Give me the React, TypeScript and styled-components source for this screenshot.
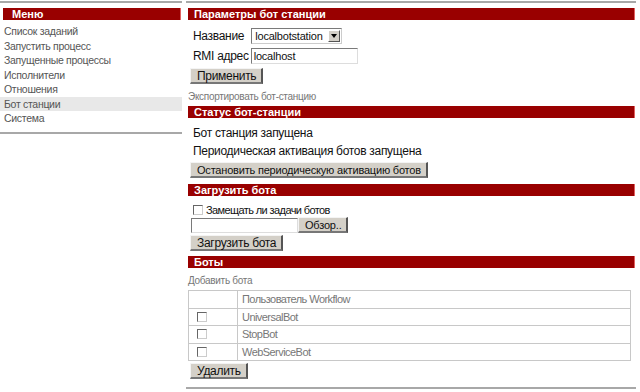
import React from 'react'
import styled, { createGlobalStyle } from 'styled-components'

const red = '#990000'

const GlobalStyle = createGlobalStyle`
  body {
    margin: 0;
    background: #fff;
    font-family: 'Liberation Sans', Arial, sans-serif;
  }
`

const Page = styled.div`
  display: flex;
  flex-direction: row;
  align-items: flex-start;
  width: 640px;
  height: 392px;
  overflow: hidden;
`

const Side = styled.div`
  width: 182px;
  margin-top: 1px;
  border-top: 2px solid #a8a8a8;
  border-bottom: 2px solid #a8a8a8;
  padding: 5px 0 6px 0;
`

const Main = styled.div`
  width: 450px;
  margin-left: 4px;
  margin-top: 1px;
  border-top: 2px solid #a8a8a8;
  border-bottom: 2px solid #a8a8a8;
  padding: 5px 0 8px 0;
`

const SectionBar = styled.div<{ $left?: number }>`
  height: 12px;
  margin-left: ${p => p.$left ?? 2}px;
  margin-right: 1px;
  background: ${red};
  border-right: 1px solid #e06060;
  color: #fff;
  font-weight: bold;
  font-size: 11px;
  line-height: 12px;
  padding-left: ${p => (p.$left ? 9 : 6)}px;
`

const MenuList = styled.div`
  padding-top: 4px;
`

const MenuItem = styled.div<{ $active?: boolean }>`
  height: 14.5px;
  line-height: 14.5px;
  font-size: 10.5px;
  letter-spacing: -0.3px;
  color: #555;
  padding-left: 4px;
  background: ${p => (p.$active ? '#e8e8e8' : 'transparent')};
`

const Body = styled.div<{ $top?: number; $left?: number }>`
  padding: ${p => p.$top ?? 6}px 0 0 ${p => p.$left ?? 4}px;
  display: flex;
  flex-direction: column;
  align-items: flex-start;
`

const FieldRow = styled.div`
  display: flex;
  align-items: center;
  gap: 4px;
  height: 20px;
  padding-left: 3px;
  font-size: 12px;
  letter-spacing: -0.3px;
  color: #111;
`

const Select = styled.div`
  width: 86px;
  height: 14px;
  border: 1px solid #7a7a7a;
  border-right-color: #ccc;
  border-bottom-color: #ccc;
  display: flex;
  align-items: center;
  font-size: 11px;
  letter-spacing: -0.2px;
  padding-left: 3px;
  justify-content: space-between;
  margin-left: 3px;
`

const SelectArrow = styled.div`
  width: 12px;
  height: 12px;
  background: #d4d0c8;
  border: 1px solid #fff;
  border-right-color: #555;
  border-bottom-color: #555;
  box-sizing: border-box;
  display: flex;
  align-items: center;
  justify-content: center;
  margin-right: 1px;
`

const TextBox = styled.div<{ $w: number; $h?: number }>`
  width: ${p => p.$w}px;
  height: ${p => p.$h ?? 14}px;
  border: 1px solid #7a7a7a;
  border-right-color: #ddd;
  border-bottom-color: #ddd;
  font-size: 11px;
  letter-spacing: -0.2px;
  line-height: 14px;
  padding-left: 2px;
  background: #fff;
`

const Button = styled.div<{ $size?: number }>`
  display: inline-flex;
  align-items: center;
  height: 16px;
  box-sizing: border-box;
  padding: 0 5px 0 6px;
  background: #d4d0c8;
  border: 1px solid #f4f4f4;
  border-right: 2px solid #555;
  border-bottom: 2px solid #777;
  font-size: ${p => p.$size ?? 11}px;
  color: #111;
  letter-spacing: ${p => (p.$size ? -0.3 : -0.2)}px;
`

const Note = styled.div<{ $top?: number; $bottom?: number }>`
  font-size: 10px;
  letter-spacing: -0.3px;
  color: #777;
  padding: ${p => p.$top ?? 7}px 0 ${p => p.$bottom ?? 3}px 2px;
  height: 12px;
  line-height: 12px;
`

const StatusLine = styled.div`
  font-size: 12px;
  letter-spacing: -0.3px;
  color: #111;
  height: 18px;
  line-height: 18px;
  padding-left: 3px;
`

const Check = styled.span`
  display: inline-block;
  width: 8px;
  height: 8px;
  border: 1px solid #666;
  border-right-color: #ccc;
  border-bottom-color: #ccc;
  background: #fff;
`

const CheckLabel = styled.div`
  display: flex;
  align-items: center;
  gap: 3px;
  font-size: 11px;
  letter-spacing: -0.6px;
  color: #111;
  height: 12px;
  margin: 3px 0 0 3px;
`

const FileRow = styled.div`
  display: flex;
  align-items: center;
  margin: 1px 0 0 1px;
`

const Table = styled.table`
  border-collapse: collapse;
  width: 443px;
  margin-left: 2px;
  font-size: 11px;
  letter-spacing: -0.55px;
  color: #777;
  td {
    border: 1px solid #c8c8c8;
    height: 16.5px;
    line-height: 14px;
    padding: 0 0 0 4px;
    vertical-align: middle;
  }
  td:first-child {
    width: 40px;
    padding-left: 8px;
  }
  ${Check} {
    display: block;
  }
`

const Spacer = styled.div<{ $h: number }>`
  height: ${p => p.$h}px;
`

const menu = ['Список заданий', 'Запустить процесс', 'Запущенные процессы', 'Исполнители', 'Отношения', 'Бот станции', 'Система']
const bots = ['UniversalBot', 'StopBot', 'WebServiceBot']

export default function App() {
  return (
    <Page>
      <GlobalStyle />
      <Side>
        <SectionBar $left={3}>Меню</SectionBar>
        <MenuList>
          {menu.map(m => (
            <MenuItem key={m} $active={m === 'Бот станции'}>{m}</MenuItem>
          ))}
        </MenuList>
      </Side>
      <Main>
        <SectionBar>Параметры бот станции</SectionBar>
        <Body>
          <FieldRow>
            <span>Название</span>
            <Select>
              <span>localbotstation</span>
              <SelectArrow>
                <svg width="6" height="4" viewBox="0 0 6 4"><path d="M0 0h6L3 4z" fill="#000" /></svg>
              </SelectArrow>
            </Select>
          </FieldRow>
          <FieldRow>
            <span>RMI адрес</span>
            <TextBox $w={103} style={{ marginLeft: -2 }}>localhost</TextBox>
          </FieldRow>
          <Spacer $h={2} />
          <Button $size={12}>Применить</Button>
        </Body>
        <Note>Экспортировать бот-станцию</Note>
        <SectionBar>Статус бот-станции</SectionBar>
        <Body>
          <StatusLine>Бот станция запущена</StatusLine>
          <StatusLine>Периодическая активация ботов запущена</StatusLine>
          <Spacer $h={2} />
          <Button>Остановить периодическую активацию ботов</Button>
        </Body>
        <Spacer $h={6} />
        <SectionBar>Загрузить бота</SectionBar>
        <Body $top={5} $left={4}>
          <CheckLabel><Check />Замещать ли задачи ботов</CheckLabel>
          <FileRow>
            <TextBox $w={103} $h={13} />
            <Button>Обзор..</Button>
          </FileRow>
          <Spacer $h={2} />
          <Button $size={12}>Загрузить бота</Button>
        </Body>
        <Spacer $h={5} />
        <SectionBar>Боты</SectionBar>
        <Note>Добавить бота</Note>
        <Table>
          <tbody>
            <tr>
              <td />
              <td>Пользователь Workflow</td>
            </tr>
            {bots.map(b => (
              <tr key={b}>
                <td><Check /></td>
                <td>{b}</td>
              </tr>
            ))}
          </tbody>
        </Table>
        <Body $top={2} $left={4}>
          <Button $size={12}>Удалить</Button>
        </Body>
      </Main>
    </Page>
  )
}
